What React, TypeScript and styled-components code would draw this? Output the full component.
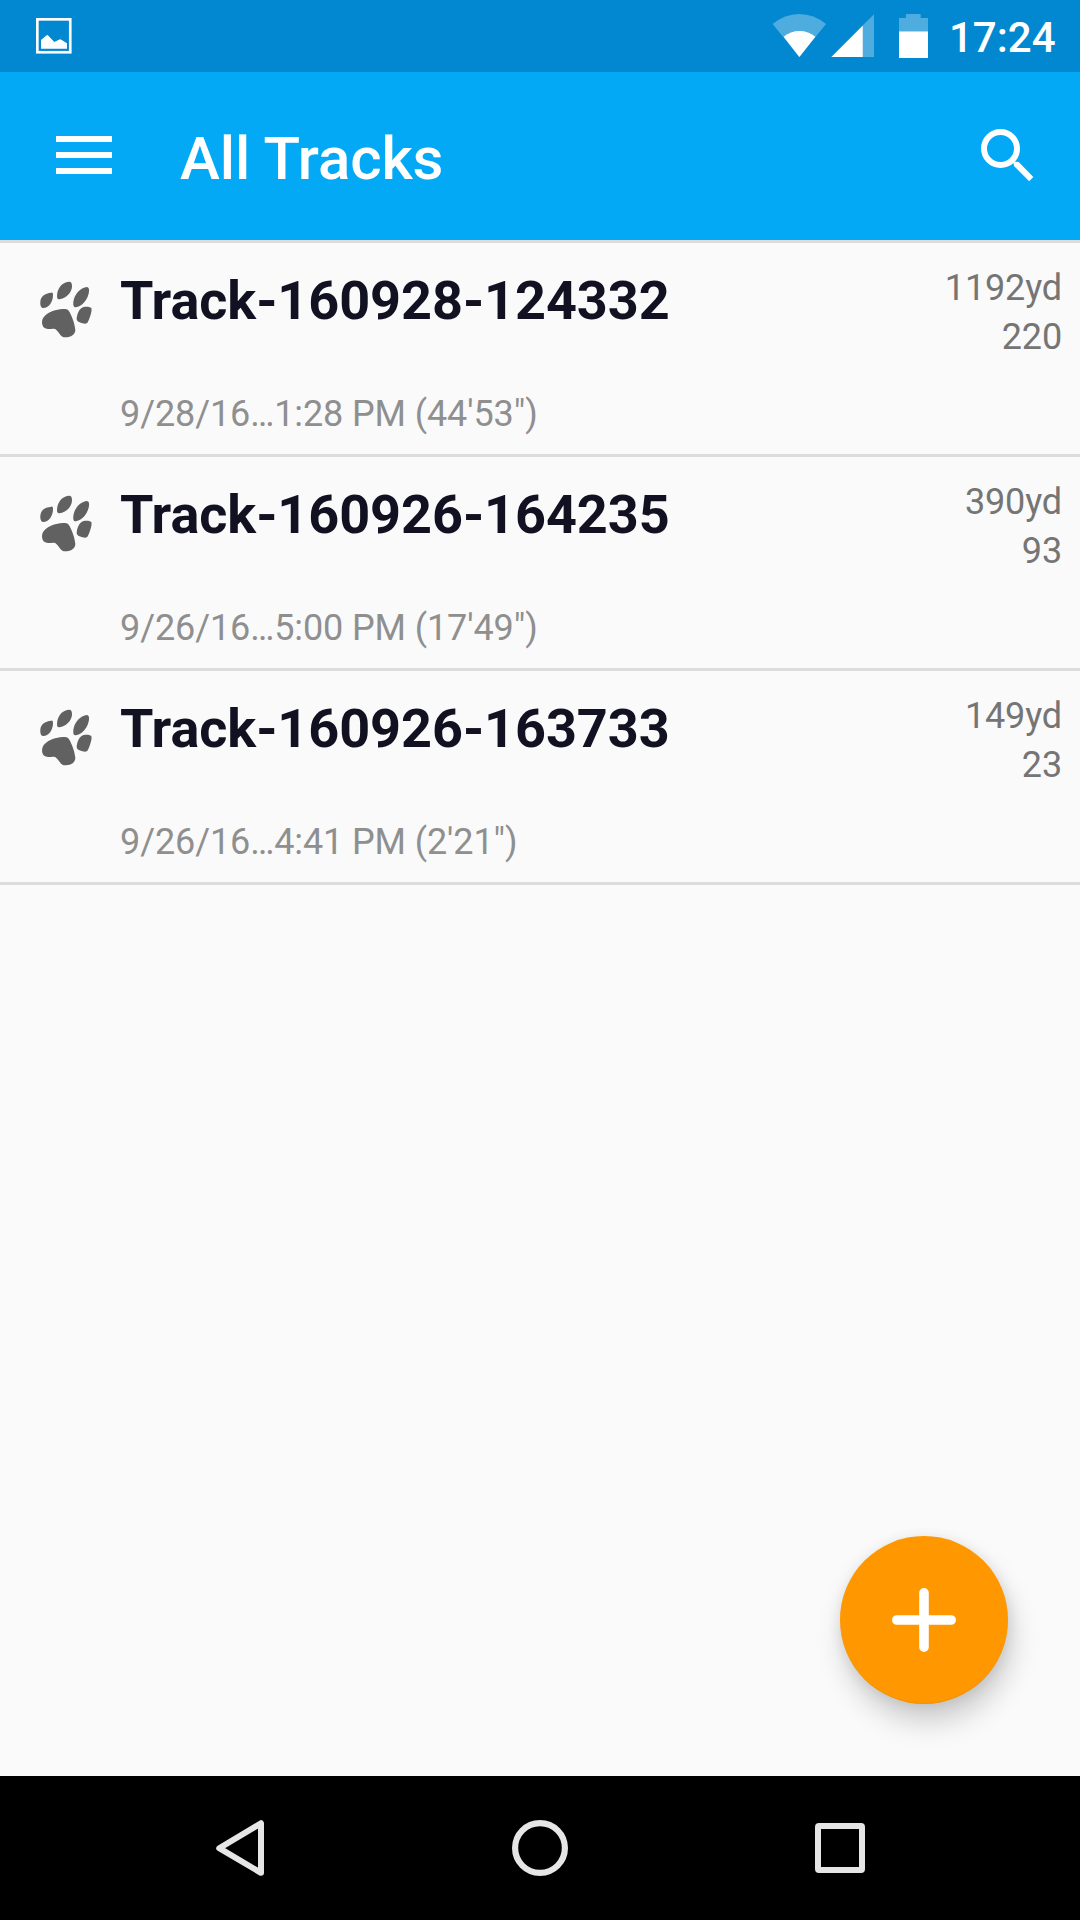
import React from "react";
import styled, { createGlobalStyle } from "styled-components";

const GlobalStyle = createGlobalStyle`
  *, *::before, *::after { box-sizing: border-box; }
  body { margin: 0; background: #fafafa; }
  button { border: 0; padding: 0; margin: 0; background: none; cursor: pointer; }
  svg { display: block; flex: none; }
`;

const Screen = styled.div`
  position: relative;
  display: flex;
  flex-direction: column;
  width: 1080px;
  height: 1920px;
  overflow: hidden;
  background: #fafafa;
  font-family: Roboto, "Noto Sans", sans-serif;
`;

const StatusBar = styled.header`
  display: flex;
  align-items: flex-start;
  justify-content: space-between;
  height: 72px;
  padding: 12px 23px 0 36px;
  background: #0288d1;
`;

const Notifications = styled.div`
  padding-top: 6px;
`;

const SystemIcons = styled.div`
  display: flex;
  align-items: flex-start;
`;

const Signals = styled.div`
  display: flex;
  gap: 4px;
  margin-right: 23px;
`;

const Clock = styled.time`
  width: 108px;
  margin-left: 20px;
  padding-top: 1px;
  font-size: 42px;
  font-weight: 500;
  line-height: 50px;
  color: #fff;
  white-space: nowrap;
`;

const AppBar = styled.div`
  display: flex;
  align-items: center;
  height: 168px;
  padding: 0 44px 0 56px;
  background: #03a9f4;
`;

const IconButton = styled.button<{ $lift?: number }>`
  display: flex;
  flex: none;
  margin-bottom: ${(p) => p.$lift ?? 0}px;
`;

const Title = styled.h1`
  flex: 1;
  margin: 0 0 0 68px;
  padding-top: 6px;
  font-size: 60px;
  font-weight: 500;
  line-height: 72px;
  letter-spacing: -0.1px;
  color: #fff;
`;

const TrackList = styled.ul`
  flex: 1;
  margin: 0;
  padding: 0;
  list-style: none;
  border-top: 3px solid #dcdcdc;
`;

const TrackRow = styled.li`
  display: flex;
  height: 214px;
  padding: 0 18px 0 40px;
  border-bottom: 3px solid #dcdcdc;
`;

const PawSlot = styled.div`
  width: 80px;
  padding-top: 38px;
`;

const TrackBody = styled.div`
  flex: 1;
  padding-top: 26px;
`;

const TrackName = styled.h2`
  margin: 0;
  font-size: 54px;
  font-weight: 700;
  line-height: 64px;
  letter-spacing: -0.06px;
  color: #111122;
`;

const TrackTime = styled.p`
  margin: 60px 0 0;
  font-size: 36px;
  line-height: 42px;
  letter-spacing: -0.1px;
  color: #8f8f8f;
`;

const TrackStats = styled.div`
  display: flex;
  flex-direction: column;
  padding-top: 21px;
  font-size: 36px;
  line-height: 49px;
  letter-spacing: -0.15px;
  text-align: right;
  color: #757575;
`;

const AddButton = styled.button`
  position: absolute;
  right: 72px;
  bottom: 216px;
  display: flex;
  align-items: center;
  justify-content: center;
  width: 168px;
  height: 168px;
  border-radius: 50%;
  background: #ff9800;
  box-shadow: 4px 18px 28px rgba(0, 0, 0, 0.18), 1px 2px 14px rgba(0, 0, 0, 0.09),
    inset 0 -1px 1px rgba(0, 0, 0, 0.06);
`;

const NavBar = styled.nav`
  display: flex;
  align-items: center;
  justify-content: center;
  gap: 216px;
  height: 144px;
  background: #000;
`;

const NavButton = styled.button`
  display: flex;
  align-items: center;
  justify-content: center;
  width: 84px;
  height: 84px;
`;

const PictureIcon = () => (
  <svg width="36" height="36" viewBox="108 54 108 108">
    <rect x="112" y="58" width="98.8" height="98.8" fill="none" stroke="#fff" strokeWidth="8" />
    <path fill="#fff" d="M123 120 139 106.500Q142 104 145 107L163 126 177 119Q180 117 184 119.500L201 130V146.500H123Z" />
  </svg>
);

const WifiIcon = () => (
  <svg width="55" height="48" viewBox="36 36 165 144">
    <path fill="#fff" fillOpacity="0.3" d="M118 171 38 72Q74 42 118 42T198 72Z" />
    <path fill="#fff" d="M118 171 71 110Q92 93 118.500 93T166 110Z" />
  </svg>
);

const CellIcon = () => (
  <svg width="44" height="48" viewBox="213 36 132 144">
    <path fill="#fff" fillOpacity="0.3" d="M308.500 76 342 42.500V171H308.500Z" />
    <path fill="#fff" d="M214 171 308.500 76.500V171Z" />
  </svg>
);

const BatteryIcon = () => (
  <svg width="31" height="48" viewBox="414 36 93 144">
    <path fill="#fff" fillOpacity="0.3" d="M417 94V54H438V42H482V54H504V94Z" />
    <path fill="#fff" d="M417 94H504V174H417Z" />
  </svg>
);

const MenuIcon = () => (
  <svg width="56" height="48" viewBox="0 0 56 48" fill="#fff">
    <path d="M0 4h56v6H0zM0 20h56v6H0zM0 36h56v6H0z" />
  </svg>
);

const SearchIcon = () => (
  <svg width="56" height="56" viewBox="660 381 168 168">
    <circle cx="721.5" cy="445.5" r="49.5" fill="none" stroke="#fff" strokeWidth="18" />
    <path fill="#fff" d="M760 488 764 484.500 776 486 820 531 807.500 543.500 762 498Z" />
  </svg>
);

const PawIcon = () => (
  <svg width="52" height="57" viewBox="60 63 156 171" fill="#616161">
    <path d="M94 98C98 97 99 100 99 105C99 127 86 144 70 144C63 144 60 135 61 125C62 109 74 100 94 98Z" />
    <path d="M148 65C154 65 156 71 156 79C156 98 138 116 118 118C111 118 110 112 112 99C115 80 130 65 148 65Z" />
    <path d="M201 81C206 82 208 87 207 95C204 116 190 137 168 142C161 143 159 138 160 126C163 102 181 83 201 81Z" />
    <path d="M189 142C200 139 211 141 214 145C217 151 210 174 203 187C201 192 195 192 187 190C178 188 170 184 170 178C171 164 176 147 189 142Z" />
    <path d="M80 163C93 152 116 147 135 147C142 147 145 150 149 157C156 170 164 190 166 210C166 223 153 232 137 232C127 232 124 229 119 222C111 211 108 205 98 206C82 208 70 206 67 194C64 181 69 171 80 163Z" />
  </svg>
);

const PlusIcon = () => (
  <svg width="64" height="64" viewBox="0 0 64 64" stroke="#fff" strokeWidth="9.6" strokeLinecap="round">
    <path d="M32 4.800V59.200M4.800 32H59.200" />
  </svg>
);

const BackIcon = () => (
  <svg width="48" height="56" viewBox="0 0 48 56">
    <path d="M45 3.200V52.800L3.200 28.200Z" fill="none" stroke="#e6e6e6" strokeWidth="6" strokeLinejoin="round" />
  </svg>
);

const HomeIcon = () => (
  <svg width="56" height="56" viewBox="0 0 56 56">
    <circle cx="28" cy="28" r="24.900" fill="none" stroke="#e6e6e6" strokeWidth="6.200" />
  </svg>
);

const RecentsIcon = () => (
  <svg width="50" height="50" viewBox="0 0 50 50">
    <path
      fill="#e6e6e6"
      fillRule="evenodd"
      d="M4 0H46Q50 0 50 4V46Q50 50 46 50H4Q0 50 0 46V4Q0 0 4 0ZM6 6V44H44V6Z"
    />
  </svg>
);

type Track = { name: string; time: string; distance: string; points: string };

const tracks: Track[] = [
  { name: "Track-160928-124332", time: "9/28/16…1:28 PM (44'53\")", distance: "1192yd", points: "220" },
  { name: "Track-160926-164235", time: "9/26/16…5:00 PM (17'49\")", distance: "390yd", points: "93" },
  { name: "Track-160926-163733", time: "9/26/16…4:41 PM (2'21\")", distance: "149yd", points: "23" },
];

export default function App() {
  return (
    <>
      <GlobalStyle />
      <Screen>
        <StatusBar>
          <Notifications>
            <PictureIcon />
          </Notifications>
          <SystemIcons>
            <Signals>
              <WifiIcon />
              <CellIcon />
            </Signals>
            <BatteryIcon />
            <Clock>17:24</Clock>
          </SystemIcons>
        </StatusBar>
        <AppBar>
          <IconButton aria-label="Menu">
            <MenuIcon />
          </IconButton>
          <Title>All Tracks</Title>
          <IconButton aria-label="Search" $lift={2}>
            <SearchIcon />
          </IconButton>
        </AppBar>
        <TrackList>
          {tracks.map((track) => (
            <TrackRow key={track.name}>
              <PawSlot>
                <PawIcon />
              </PawSlot>
              <TrackBody>
                <TrackName>{track.name}</TrackName>
                <TrackTime>{track.time}</TrackTime>
              </TrackBody>
              <TrackStats>
                <span>{track.distance}</span>
                <span>{track.points}</span>
              </TrackStats>
            </TrackRow>
          ))}
        </TrackList>
        <NavBar>
          <NavButton aria-label="Back">
            <BackIcon />
          </NavButton>
          <NavButton aria-label="Home">
            <HomeIcon />
          </NavButton>
          <NavButton aria-label="Recent apps">
            <RecentsIcon />
          </NavButton>
        </NavBar>
        <AddButton aria-label="Add track">
          <PlusIcon />
        </AddButton>
      </Screen>
    </>
  );
}
